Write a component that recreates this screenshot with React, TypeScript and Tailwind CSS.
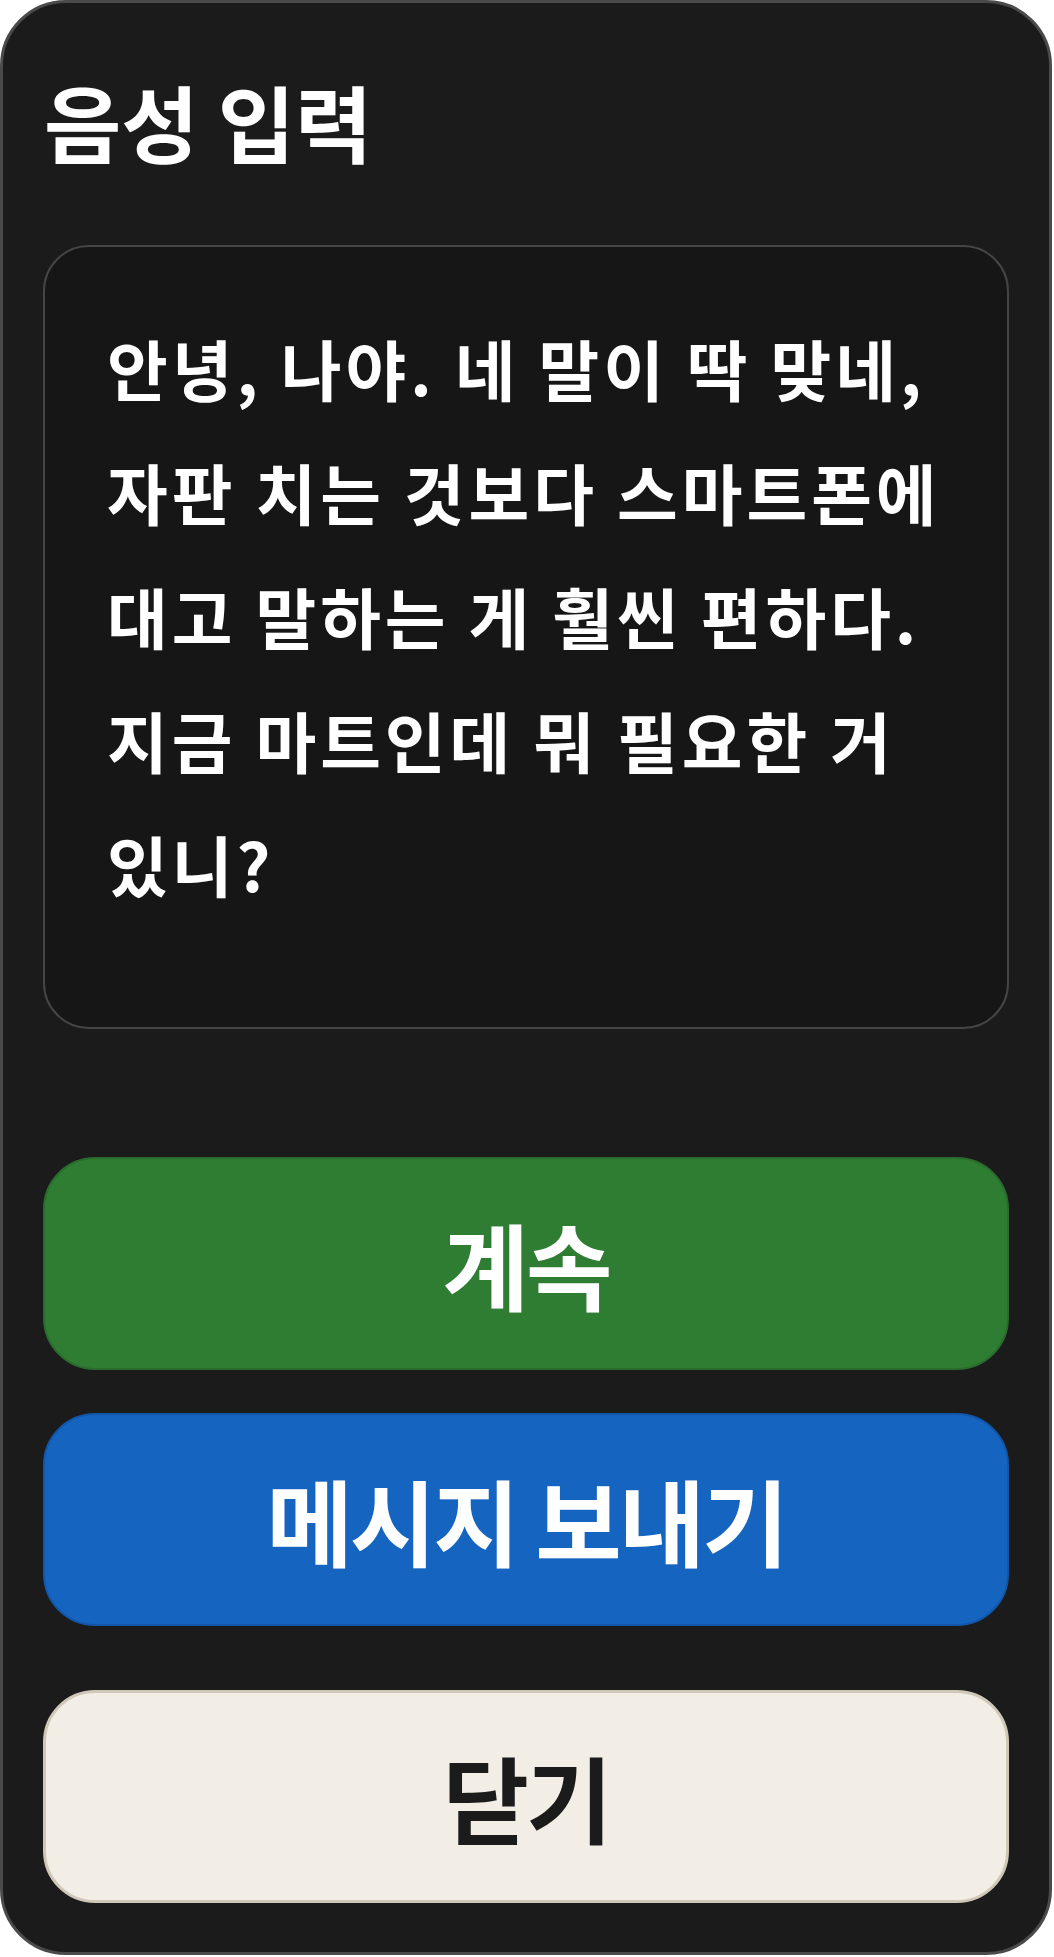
export default function App() {
  const lines = [
    "안녕, 나야. 네 말이 딱 맞네,",
    "자판 치는 것보다 스마트폰에",
    "대고 말하는 게 훨씬 편하다.",
    "지금 마트인데 뭐 필요한 거",
    "있니?",
  ];
  return (
    <div className="w-[1054px] h-[1957px] bg-white">
      <div
        className="w-[1052px] h-[1955px] bg-[#1b1b1b] border-[3px] border-[#4a4a4a] rounded-[66px] flex flex-col px-10 pt-[58px]"
        style={{ fontFamily: '"Noto Sans CJK KR", "Noto Sans", sans-serif' }}
      >
        <h1 className="text-[84px] font-bold leading-[120px] text-white m-0 pl-[1px]">음성 입력</h1>
        <div className="mt-[64px] h-[784px] rounded-[46px] border-2 border-[#454545] bg-[#161616] pl-[62px] pr-[20px] pt-[58px]">
          <div className="text-[66px] font-bold leading-[124px] tracking-[4px] text-white">
            {lines.map((l) => (
              <div key={l} className="whitespace-nowrap">
                {l}
              </div>
            ))}
          </div>
        </div>
        <div className="mt-[128px] flex flex-col">
          <button className="h-[213px] rounded-[52px] border-2 border-[#2a6b2e] bg-[#2e7d32] text-white text-[94px] tracking-[-3px] font-bold">
            계속
          </button>
          <button className="mt-[43px] h-[213px] rounded-[52px] border-2 border-[#1256a8] bg-[#1565c0] text-white text-[94px] tracking-[-3px] font-bold">
            메시지 보내기
          </button>
          <button className="mt-[64px] h-[213px] rounded-[52px] border-[3px] border-[#cfc7b8] bg-[#f2ede5] text-[#1b1b1b] text-[94px] tracking-[-3px] font-bold">
            닫기
          </button>
        </div>
      </div>
    </div>
  );
}
